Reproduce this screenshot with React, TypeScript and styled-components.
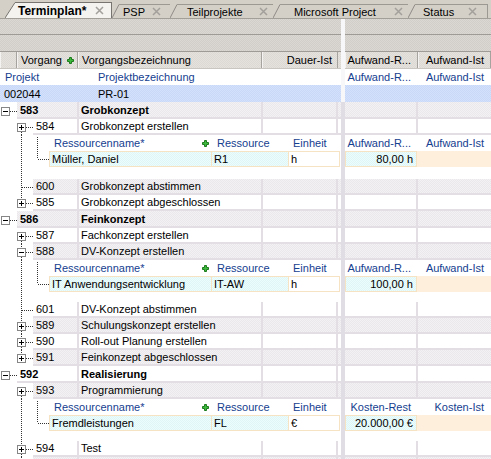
import React from 'react';
import styled, { createGlobalStyle, css } from 'styled-components';

const BLUE = '#15408f';
const LINE = '#e2dee4';
const FONT = '"Liberation Sans", Arial, sans-serif';

const GlobalStyle = createGlobalStyle`
  html, body { margin: 0; padding: 0; background: #ffffff; }
  body { font-family: ${FONT}; font-size: 11px; color: #000; overflow: hidden; }
  #root { width: 491px; height: 459px; overflow: hidden; }
`;

const checker = (a: string, b: string) => css`
  background-color: ${a};
  background-image: repeating-conic-gradient(${a} 0 25%, ${b} 0 50%);
  background-size: 2px 2px;
`;

/* ---------- frame ---------- */
const Screen = styled.div`
  width: 491px;
  height: 459px;
  display: flex;
  flex-direction: column;
  overflow: hidden;
  background: #fff;
`;

/* ---------- tabs ---------- */
const TabStrip = styled.div`
  flex: none;
  height: 18px;
  display: flex;
  align-items: flex-end;
  padding-left: 5px;
  background: #d4d0c8;
  border-bottom: 1px solid #a29e98;
`;

const TabItem = styled.div<{ $w: number; $active?: boolean }>`
  flex: none;
  width: ${p => p.$w}px;
  height: ${p => (p.$active ? 16 : 14)}px;
  display: flex;
`;

const TabLabel = styled.div<{ $active?: boolean; $pl: number; $pr: number; $edge?: boolean }>`
  flex: 1;
  display: flex;
  align-items: center;
  justify-content: space-between;
  padding: 0 ${p => p.$pr}px 0 ${p => p.$pl}px;
  background: ${p => (p.$active ? '#f4f3f0' : '#d4d0c8')};
  border-top: 1px solid ${p => (p.$active ? '#77736e' : '#9c9892')};
  border-right: ${p => (p.$edge ? `1px solid ${p.$active ? '#77736e' : '#9c9892'}` : 'none')};
  font-size: ${p => (p.$active ? 12 : 11)}px;
  font-weight: ${p => (p.$active ? 700 : 400)};
  white-space: nowrap;
`;

const TabSlant = ({ w, h, active }: { w: number; h: number; active?: boolean }) => (
  <svg width={w} height={h} style={{ flex: 'none', display: 'block' }}>
    <polygon points={`0,${h} ${w},0 ${w},${h}`} fill={active ? '#f4f3f0' : '#d4d0c8'} />
    <line x1={0} y1={h} x2={w} y2={0.5} stroke={active ? '#77736e' : '#8f8b86'} strokeWidth={1} />
  </svg>
);

const CloseX = () => (
  <svg width="9" height="9" viewBox="0 0 9 9" style={{ display: 'block' }}>
    <path d="M1 1L8 8M8 1L1 8" stroke="#a3a09b" strokeWidth="1.5" />
  </svg>
);

const TABS = [
  { label: 'Terminplan*', w: 107, slant: 10, pl: 3, pr: 7, active: true, edge: true },
  { label: 'PSP', w: 58, slant: 7, pl: 4, pr: 9 },
  { label: 'Teilprojekte', w: 103, slant: 7, pl: 10, pr: 5 },
  { label: 'Microsoft Project', w: 135, slant: 7, pl: 14, pr: 5 },
  { label: 'Status', w: 80, slant: 7, pl: 8, pr: 10, edge: true },
];

/* ---------- bands / panes ---------- */
const Band = styled.div<{ $h: number }>`
  flex: none;
  height: ${p => p.$h}px;
  border-bottom: 1px solid #9e9a96;
  ${checker('#dbd7d3', '#d1cdc8')}
`;

const Workspace = styled.div`
  flex: 1;
  min-height: 0;
  display: flex;
`;

const Pane = styled.div<{ $w?: number }>`
  ${p => (p.$w ? `width: ${p.$w}px; flex: none;` : 'flex: 1; min-width: 0;')}
  display: flex;
  flex-direction: column;
  overflow: hidden;
`;

const Splitter = styled.div`
  width: 4px;
  flex: none;
  display: flex;
  flex-direction: column;
`;
const SplitterTop = styled.div`
  flex: none;
  height: 83px;
  background: #f7f6f8;
`;
const SplitterRest = styled.div`
  flex: 1;
  background: #e1dde5;
`;

/* ---------- column header ---------- */
const HeaderRow = styled.div`
  flex: none;
  height: 16px;
  display: flex;
  border-bottom: 1px solid #c9c5c1;
  ${checker('#e5e1dd', '#dcd8d4')}
`;

const HeaderCell = styled.div<{ $w?: number; $right?: boolean; $pr?: number; $flat?: boolean }>`
  ${p => (p.$w ? `width: ${p.$w}px; flex: none;` : 'flex: 1; min-width: 0;')}
  box-sizing: border-box;
  display: flex;
  align-items: center;
  justify-content: ${p => (p.$right ? 'flex-end' : 'space-between')};
  padding: 0 ${p => p.$pr ?? 3}px 0 4px;
  border-right: ${p => (p.$flat ? 'none' : '1px solid #a6a29d')};
  box-shadow: ${p => (p.$flat ? 'none' : 'inset 1px 0 0 #f5f3f1')};
  white-space: nowrap;
  overflow: hidden;
`;

const GreenPlus = () => (
  <svg width="7" height="7" viewBox="0 0 7 7" style={{ display: 'block', flex: 'none' }}>
    <path d="M2.5 .5h2v2h2v2h-2v2h-2v-2h-2v-2h2z" fill="#3dbb3d" stroke="#1c7a1c" strokeWidth="1" />
  </svg>
);

/* ---------- project rows ---------- */
const ProjectRow = styled.div<{ $h: number; $tone: 'plain' | 'blue' }>`
  flex: none;
  height: ${p => p.$h}px;
  display: flex;
  align-items: center;
  ${p => (p.$tone === 'blue' ? checker('#d3e1fc', '#c8d8f6') : css`background: #fff;`)}
`;

const Field = styled.span<{ $w?: number; $pl?: number; $pr?: number; $blue?: boolean; $right?: boolean }>`
  ${p => (p.$w ? `width: ${p.$w}px; flex: none;` : 'flex: 1; min-width: 0;')}
  box-sizing: border-box;
  padding: 0 ${p => p.$pr ?? 0}px 0 ${p => p.$pl ?? 0}px;
  text-align: ${p => (p.$right ? 'right' : 'left')};
  color: ${p => (p.$blue ? BLUE : '#000')};
  white-space: nowrap;
  overflow: hidden;
`;

/* ---------- grid rows ---------- */
const GridRow = styled.div<{ $h: number }>`
  flex: none;
  height: ${p => p.$h}px;
  display: flex;
`;

const GutterBox = styled.div<{ $w: number }>`
  flex: none;
  width: ${p => p.$w}px;
  height: 100%;
  background: #fff;
  line-height: 0;
`;

const TaskCell = styled.div<{ $w?: number; $shade: boolean; $bold?: boolean; $pl?: number; $noRight?: boolean }>`
  ${p => (p.$w ? `width: ${p.$w}px; flex: none;` : 'flex: 1; min-width: 0;')}
  box-sizing: border-box;
  height: 100%;
  display: flex;
  align-items: center;
  padding-left: ${p => p.$pl ?? 0}px;
  border-bottom: 2px solid ${LINE};
  border-right: ${p => (p.$noRight ? 'none' : `2px solid ${LINE}`)};
  ${p => (p.$shade ? checker('#f3f1f3', '#eae8ea') : css`background: #fff;`)}
  font-weight: ${p => (p.$bold ? 700 : 400)};
  white-space: nowrap;
  overflow: hidden;
`;

const SubHeadCell = styled.div<{ $w?: number; $pl?: number; $pr?: number; $right?: boolean }>`
  ${p => (p.$w ? `width: ${p.$w}px; flex: none;` : 'flex: 1; min-width: 0;')}
  box-sizing: border-box;
  height: 100%;
  display: flex;
  align-items: center;
  justify-content: ${p => (p.$right ? 'flex-end' : 'space-between')};
  padding: 0 ${p => p.$pr ?? 0}px 0 ${p => p.$pl ?? 0}px;
  color: ${BLUE};
  background: #fff;
  white-space: nowrap;
  overflow: hidden;
`;

const tones = {
  cyan: checker('#ecfdfd', '#e0f5f6'),
  white: css`background: #fff;`,
  peach: css`background: #fdefdb;`,
};

const SubDataCell = styled.div<{ $w?: number; $tone: keyof typeof tones; $right?: boolean; $first?: boolean; $bare?: boolean }>`
  ${p => (p.$w ? `width: ${p.$w}px; flex: none;` : 'flex: 1; min-width: 0;')}
  box-sizing: border-box;
  height: 100%;
  display: flex;
  align-items: center;
  justify-content: ${p => (p.$right ? 'flex-end' : 'flex-start')};
  padding: 0 3px 0 2px;
  border: ${p => (p.$bare ? 'none' : '1px solid #f5e3c3')};
  border-left-width: ${p => (p.$first ? 1 : 0)}px;
  ${p => tones[p.$tone]}
  white-space: nowrap;
  overflow: hidden;
`;

const BlankFill = styled.div`
  flex: 1;
  background: #fff;
`;

/* ---------- tree connectors ---------- */
type GutterKind = 'l1' | 'l2' | 'leaf' | 'subhead' | 'subdata' | 'blank';

const DOT = { stroke: '#333333', strokeWidth: 1, strokeDasharray: '1 1', shapeRendering: 'crispEdges' as const };

function TreeGutter(props: {
  kind: GutterKind; w: number; h: number; open?: boolean; first?: boolean; last?: boolean; cont?: boolean;
}) {
  const { kind, w, h, open, first, last, cont } = props;
  const cy = Math.floor(h / 2) + (h % 2);
  const parts: React.ReactNode[] = [];
  const v = (x: number, y1: number, y2: number, k: string) =>
    parts.push(<line key={k} x1={x + 0.5} y1={y1} x2={x + 0.5} y2={y2} {...DOT} />);
  const hz = (y: number, x1: number, x2: number, k: string) =>
    parts.push(<line key={k} x1={x1} y1={y + 0.5} x2={x2} y2={y + 0.5} {...DOT} />);
  const box = (bx: number, isOpen: boolean) => {
    const by = cy - 4;
    parts.push(
      <g key="box" shapeRendering="crispEdges">
        <rect x={bx + 0.5} y={by + 0.5} width={8} height={8} fill="#fff" stroke="#868686" />
        <line x1={bx + 2} y1={by + 4.5} x2={bx + 7} y2={by + 4.5} stroke="#000" />
        {!isOpen && <line x1={bx + 4.5} y1={by + 2} x2={bx + 4.5} y2={by + 7} stroke="#000" />}
      </g>,
    );
  };

  if (kind === 'l1') {
    hz(cy, 10, 17, 'h');
    box(1, !!open);
  } else if (kind === 'l2') {
    if (!first) v(21, 0, cy - 4, 'vt');
    if (!last) v(21, cy + 5, h, 'vb');
    hz(cy, 26, 33, 'h');
    box(17, !!open);
  } else if (kind === 'leaf') {
    v(21, 0, last ? cy : h, 'v');
    hz(cy, 22, 33, 'h');
  } else if (kind === 'subhead') {
    if (cont) v(21, 0, h, 'v');
    v(37, 2, h, 'v2');
  } else if (kind === 'subdata') {
    if (cont) v(21, 0, h, 'v');
    v(37, 0, cy, 'v2');
    hz(cy, 38, 49, 'h');
  } else if (kind === 'blank') {
    if (cont) v(21, 0, h, 'v');
  }

  return (
    <GutterBox $w={w}>
      <svg width={w} height={h} style={{ display: 'block' }}>{parts}</svg>
    </GutterBox>
  );
}

/* ---------- data ---------- */
type Row =
  | { kind: 'task'; level: 1 | 2; id: string; name: string; shade: boolean; open?: boolean; leaf?: boolean; first?: boolean; last?: boolean }
  | { kind: 'subhead'; cont: boolean; rest: string; ist: string }
  | { kind: 'subdata'; cont: boolean; name: string; res: string; unit: string; value: string }
  | { kind: 'blank'; h: number; cont: boolean };

const ROWS: Row[] = [
  { kind: 'task', level: 1, id: '583', name: 'Grobkonzept', shade: true, open: true },
  { kind: 'task', level: 2, id: '584', name: 'Grobkonzept erstellen', shade: false, first: true },
  { kind: 'subhead', cont: true, rest: 'Aufwand-R...', ist: 'Aufwand-Ist' },
  { kind: 'subdata', cont: true, name: 'Müller, Daniel', res: 'R1', unit: 'h', value: '80,00 h' },
  { kind: 'blank', h: 12, cont: true },
  { kind: 'task', level: 2, id: '600', name: 'Grobkonzept abstimmen', shade: true, leaf: true },
  { kind: 'task', level: 2, id: '585', name: 'Grobkonzept abgeschlossen', shade: false, last: true },
  { kind: 'task', level: 1, id: '586', name: 'Feinkonzept', shade: true, open: true },
  { kind: 'task', level: 2, id: '587', name: 'Fachkonzept erstellen', shade: false, first: true },
  { kind: 'task', level: 2, id: '588', name: 'DV-Konzept erstellen', shade: true, open: true },
  { kind: 'subhead', cont: true, rest: 'Aufwand-R...', ist: 'Aufwand-Ist' },
  { kind: 'subdata', cont: true, name: 'IT Anwendungsentwicklung', res: 'IT-AW', unit: 'h', value: '100,00 h' },
  { kind: 'blank', h: 10, cont: true },
  { kind: 'task', level: 2, id: '601', name: 'DV-Konzept abstimmen', shade: false, leaf: true },
  { kind: 'task', level: 2, id: '589', name: 'Schulungskonzept erstellen', shade: true },
  { kind: 'task', level: 2, id: '590', name: 'Roll-out Planung erstellen', shade: false },
  { kind: 'task', level: 2, id: '591', name: 'Feinkonzept abgeschlossen', shade: true, last: true },
  { kind: 'task', level: 1, id: '592', name: 'Realisierung', shade: false, open: true },
  { kind: 'task', level: 2, id: '593', name: 'Programmierung', shade: true, first: true },
  { kind: 'subhead', cont: true, rest: 'Kosten-Rest', ist: 'Kosten-Ist' },
  { kind: 'subdata', cont: true, name: 'Fremdleistungen', res: 'FL', unit: '€', value: '20.000,00 €' },
  { kind: 'blank', h: 10, cont: true },
  { kind: 'task', level: 2, id: '594', name: 'Test', shade: false },
  { kind: 'task', level: 2, id: '', name: '', shade: true },
];

const rowHeight = (r: Row) => (r.kind === 'blank' ? r.h : r.kind === 'task' && r.level === 1 ? 17 : 16);

function LeftRow({ row }: { row: Row }) {
  const h = rowHeight(row);
  if (row.kind === 'task') {
    const gw = row.level === 1 ? 17 : 33;
    const kind: GutterKind = row.level === 1 ? 'l1' : row.leaf ? 'leaf' : 'l2';
    return (
      <GridRow $h={h}>
        <TreeGutter kind={kind} w={gw} h={h} open={row.open} first={row.first} last={row.last} />
        <TaskCell $w={79 - gw} $shade={row.shade} $bold={row.level === 1} $pl={3}>{row.id}</TaskCell>
        <TaskCell $w={184} $shade={row.shade} $bold={row.level === 1} $pl={2}>{row.name}</TaskCell>
        <TaskCell $w={75} $shade={row.shade} />
        <TaskCell $shade={row.shade} $noRight />
      </GridRow>
    );
  }
  if (row.kind === 'subhead') {
    return (
      <GridRow $h={h}>
        <TreeGutter kind="subhead" w={49} h={h} cont={row.cont} />
        <SubHeadCell $w={163} $pl={5} $pr={3}>
          <span>Ressourcenname*</span>
          <GreenPlus />
        </SubHeadCell>
        <SubHeadCell $w={77} $pl={5}>Ressource</SubHeadCell>
        <SubHeadCell $pl={4}>Einheit</SubHeadCell>
      </GridRow>
    );
  }
  if (row.kind === 'subdata') {
    return (
      <GridRow $h={h}>
        <TreeGutter kind="subdata" w={49} h={h} cont={row.cont} />
        <SubDataCell $w={163} $tone="cyan" $first>{row.name}</SubDataCell>
        <SubDataCell $w={77} $tone="cyan">{row.res}</SubDataCell>
        <SubDataCell $w={51} $tone="white">{row.unit}</SubDataCell>
        <SubDataCell $tone="white" $bare />
      </GridRow>
    );
  }
  return (
    <GridRow $h={h}>
      <TreeGutter kind="blank" w={49} h={h} cont={row.cont} />
      <BlankFill />
    </GridRow>
  );
}

function RightRow({ row }: { row: Row }) {
  const h = rowHeight(row);
  if (row.kind === 'task') {
    return (
      <GridRow $h={h}>
        <TaskCell $w={73} $shade={row.shade} />
        <TaskCell $shade={row.shade} $noRight />
      </GridRow>
    );
  }
  if (row.kind === 'subhead') {
    return (
      <GridRow $h={h}>
        <SubHeadCell $w={73} $right $pr={7}>{row.rest}</SubHeadCell>
        <SubHeadCell $right $pr={7}>{row.ist}</SubHeadCell>
      </GridRow>
    );
  }
  if (row.kind === 'subdata') {
    return (
      <GridRow $h={h}>
        <SubDataCell $w={72} $tone="cyan" $first $right>{row.value}</SubDataCell>
        <SubDataCell $tone="peach" $bare />
      </GridRow>
    );
  }
  return (
    <GridRow $h={h}>
      <BlankFill />
    </GridRow>
  );
}

export default function App() {
  return (
    <>
      <GlobalStyle />
      <Screen>
        <TabStrip>
          {TABS.map(t => (
            <TabItem key={t.label} $w={t.w} $active={t.active}>
              <TabSlant w={t.slant} h={t.active ? 16 : 14} active={t.active} />
              <TabLabel $active={t.active} $pl={t.pl} $pr={t.pr} $edge={t.edge}>
                <span>{t.label}</span>
                <CloseX />
              </TabLabel>
            </TabItem>
          ))}
        </TabStrip>

        <Workspace>
          <Pane $w={341}>
            <Band $h={15} />
            <Band $h={16} />
            <HeaderRow>
              <HeaderCell $w={17} />
              <HeaderCell $w={61}>
                <span>Vorgang</span>
                <GreenPlus />
              </HeaderCell>
              <HeaderCell $w={184}>Vorgangsbezeichnung</HeaderCell>
              <HeaderCell $w={76} $right $pr={5}>Dauer-Ist</HeaderCell>
              <HeaderCell $flat />
            </HeaderRow>
            <ProjectRow $h={16} $tone="plain">
              <Field $w={98} $pl={5} $blue>Projekt</Field>
              <Field $blue>Projektbezeichnung</Field>
            </ProjectRow>
            <ProjectRow $h={17} $tone="blue">
              <Field $w={98} $pl={4}>002044</Field>
              <Field>PR-01</Field>
            </ProjectRow>
            {ROWS.map((r, i) => (
              <LeftRow key={i} row={r} />
            ))}
          </Pane>

          <Splitter>
            <SplitterTop />
            <SplitterRest />
          </Splitter>

          <Pane>
            <Band $h={15} />
            <Band $h={16} />
            <HeaderRow>
              <HeaderCell $w={73} $right $pr={6}>Aufwand-R...</HeaderCell>
              <HeaderCell $right $pr={6}>Aufwand-Ist</HeaderCell>
            </HeaderRow>
            <ProjectRow $h={16} $tone="plain">
              <Field $w={73} $right $pr={7} $blue>Aufwand-R...</Field>
              <Field $right $pr={7} $blue>Aufwand-Ist</Field>
            </ProjectRow>
            <ProjectRow $h={17} $tone="blue" />
            {ROWS.map((r, i) => (
              <RightRow key={i} row={r} />
            ))}
          </Pane>
        </Workspace>
      </Screen>
    </>
  );
}
